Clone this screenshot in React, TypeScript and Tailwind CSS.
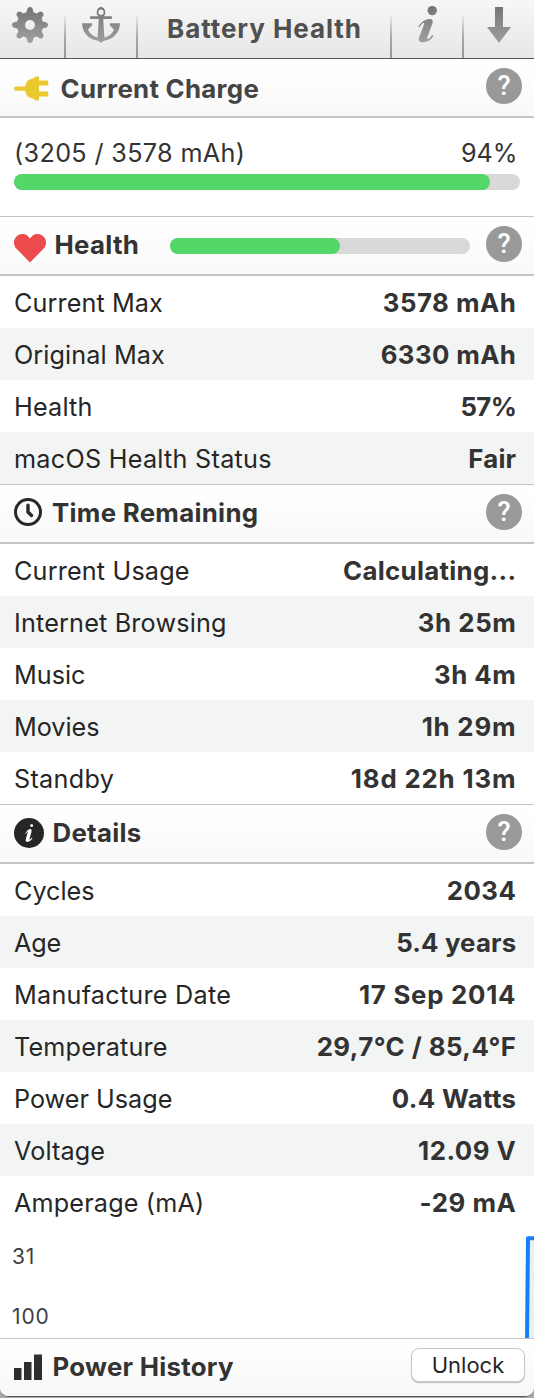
import type { ReactNode } from 'react';

type RowData = { label: string; value: string; labelTrack: string; valueTrack: string };

const healthRows: RowData[] = [
  { label: 'Current Max', value: '3578 mAh', labelTrack: 'tracking-[0.1px]', valueTrack: 'tracking-[0.5px]' },
  { label: 'Original Max', value: '6330 mAh', labelTrack: 'tracking-[0.1px]', valueTrack: 'tracking-[0.4px]' },
  { label: 'Health', value: '57%', labelTrack: 'tracking-[0.2px]', valueTrack: 'tracking-[-0.6px]' },
  { label: 'macOS Health Status', value: 'Fair', labelTrack: 'tracking-[0.27px]', valueTrack: 'tracking-[0.2px]' },
];

const timeRows: RowData[] = [
  { label: 'Current Usage', value: 'Calculating...', labelTrack: 'tracking-[0.17px]', valueTrack: 'tracking-[0.31px]' },
  { label: 'Internet Browsing', value: '3h 25m', labelTrack: 'tracking-[0.18px]', valueTrack: 'tracking-[0.57px]' },
  { label: 'Music', value: '3h 4m', labelTrack: 'tracking-normal', valueTrack: 'tracking-[0.5px]' },
  { label: 'Movies', value: '1h 29m', labelTrack: 'tracking-normal', valueTrack: 'tracking-[0.8px]' },
  { label: 'Standby', value: '18d 22h 13m', labelTrack: 'tracking-[0.3px]', valueTrack: 'tracking-[0.84px]' },
];

const detailRows: RowData[] = [
  { label: 'Cycles', value: '2034', labelTrack: 'tracking-normal', valueTrack: 'tracking-[0.45px]' },
  { label: 'Age', value: '5.4 years', labelTrack: 'tracking-[-0.2px]', valueTrack: 'tracking-[0.16px]' },
  { label: 'Manufacture Date', value: '17 Sep 2014', labelTrack: 'tracking-[0.25px]', valueTrack: 'tracking-[0.76px]' },
  { label: 'Temperature', value: '29,7°C / 85,4°F', labelTrack: 'tracking-[0.18px]', valueTrack: 'tracking-[0.46px]' },
  { label: 'Power Usage', value: '0.4 Watts', labelTrack: 'tracking-normal', valueTrack: 'tracking-[0.36px]' },
  { label: 'Voltage', value: '12.09 V', labelTrack: 'tracking-[0.1px]', valueTrack: 'tracking-[0.5px]' },
  { label: 'Amperage (mA)', value: '-29 mA', labelTrack: 'tracking-[0.16px]', valueTrack: 'tracking-[0.55px]' },
];

function Rows({ rows }: { rows: RowData[] }) {
  return (
    <div>
      {rows.map((row) => (
        <div
          key={row.label}
          className="flex h-[52px] items-center justify-between bg-white pl-[14px] pr-[17.7px] pt-[3px] text-[25.2px] even:bg-[#f3f5f4]"
        >
          <span className={`text-[#262626] ${row.labelTrack}`}>{row.label}</span>
          <span className={`pb-[2px] text-[25.8px] font-bold text-[#333] ${row.valueTrack}`}>{row.value}</span>
        </div>
      ))}
    </div>
  );
}

function Help() {
  return (
    <button className="mb-[3px] flex size-9 shrink-0 items-center justify-center rounded-full bg-[#999] font-['Roboto','Inter',sans-serif] text-[27px] font-medium leading-none text-white">
      ?
    </button>
  );
}

function SectionHeader({
  icon,
  title,
  gap,
  first = false,
  children,
}: {
  icon: ReactNode;
  title: string;
  gap: string;
  first?: boolean;
  children?: ReactNode;
}) {
  return (
    <div
      className={`flex items-center border-b-2 border-[#c4c4c4] bg-linear-to-b from-white to-[#f9f9f9] pl-[14px] pr-3 ${
        first ? 'h-[59px]' : 'h-[60px] border-t border-t-[#c4c4c4]'
      }`}
    >
      {icon}
      <h2 className={`${gap} text-[25.8px] font-bold tracking-[0.3px]`}>{title}</h2>
      <div className="flex flex-1 justify-end">{children}</div>
      <Help />
    </div>
  );
}

function ToolDivider() {
  return <div className="h-[42px] w-[2px] self-end bg-linear-to-b from-[#e8e8e8] via-[#aaa] to-[#969696]" />;
}

function ToolGradient({ id }: { id: string }) {
  return (
    <defs>
      <linearGradient id={id} x1="0" y1="6" x2="0" y2="43" gradientUnits="userSpaceOnUse">
        <stop offset="0" stopColor="#747474" />
        <stop offset="1" stopColor="#a0a0a0" />
      </linearGradient>
    </defs>
  );
}

function Gear() {
  return (
    <svg width="64" height="58" viewBox="0 0 64 58">
      <ToolGradient id="gear" />
      <path
        fill="url(#gear)"
        fillRule="evenodd"
        d="M27.6 8.3Q30 5.6 32.4 8.3L33.6 12.2L36.6 13.4L40 11.4Q43.6 11.3 43.6 15L41.6 18.4L42.8 21.4L46.7 22.6Q49.4 25 46.7 27.4L42.8 28.6L41.6 31.6L43.6 35Q43.6 38.7 40 38.6L36.6 36.6L33.6 37.8L32.4 41.7Q30 44.4 27.6 41.7L26.4 37.8L23.4 36.6L20 38.6Q16.4 38.7 16.4 35L18.4 31.6L17.2 28.6L13.3 27.4Q10.6 25 13.3 22.6L17.2 21.4L18.4 18.4L16.4 15Q16.4 11.3 20 11.4L23.4 13.4L26.4 12.2ZM30 20A5 5 0 1 0 30 30A5 5 0 1 0 30 20Z"
      />
    </svg>
  );
}

function Anchor() {
  return (
    <svg width="70" height="58" viewBox="66 0 70 58">
      <ToolGradient id="anchor" />
      <path
        fill="url(#anchor)"
        fillRule="evenodd"
        d="M101 6.8A5.6 5.6 0 0 1 103.8 16.2H111Q112.2 16.2 112.2 17.5Q112.2 18.9 111 18.9H103.2L104.4 37.6C109 36.6 112.5 33.4 113.9 29.6L109.8 25.3V23.2H120C119.8 32 113.7 39 106 40.2C103.6 40.7 102.2 41.6 101 43C99.8 41.6 98.4 40.7 96 40.2C88.3 39 82.2 32 82 23.2H92.2V25.3L88.1 29.6C89.5 33.4 93 36.6 97.6 37.6L98.8 18.9H91Q89.8 18.9 89.8 17.5Q89.8 16.2 91 16.2H98.2A5.6 5.6 0 0 1 101 6.8ZM101 9.6A2.6 2.6 0 1 0 101 14.8A2.6 2.6 0 1 0 101 9.6Z"
      />
    </svg>
  );
}

function ItalicInfo() {
  return (
    <svg width="70" height="58" viewBox="392 0 70 58">
      <ToolGradient id="info" />
      <g fill="url(#info)">
        <circle cx="432.2" cy="10.6" r="4.7" />
        <path d="M418.4 26.5C421.5 21.3 426.3 19 430 19C432.5 19 433.4 21 432.4 23.6L427.5 36.7C426.7 39 427.4 39.4 428.5 38.8C430 38 431.2 36.5 432.2 35L433.6 36C430.9 40.2 427 42.2 422.8 42.2C419.4 42.2 418 40.3 419.2 37.2L424 24.6C424.7 22.8 423.8 22.6 422.7 23.3C421.6 24 420.8 25.2 419.8 27.2Z" />
      </g>
    </svg>
  );
}

function DownArrow() {
  return (
    <svg width="70" height="58" viewBox="464 0 70 58">
      <ToolGradient id="arrow" />
      <path fill="url(#arrow)" d="M495 7H503V27H511L499 43L487 27H495Z" />
    </svg>
  );
}

const plug = (
  <svg className="mt-[2px] shrink-0" width="35" height="26" viewBox="0 0 35 26" fill="#eac82f">
    <path d="M2 10.4H11.2C11.8 5.5 15 2.5 20.5 2.2V1.5Q20.5 0.5 21.5 0.5H24Q25 0.5 25 1.5V4.4H33Q34.3 4.4 34.3 5.7V8.2Q34.3 9.5 33 9.5H25V15.5H33Q34.3 15.5 34.3 16.8V19.2Q34.3 20.5 33 20.5H25V23.5Q25 24.5 24 24.5H21.5Q20.5 24.5 20.5 23.5V22.8C15 22.5 11.8 19.5 11.2 14.8H2Q0 14.8 0 12.6Q0 10.4 2 10.4Z" />
  </svg>
);

const heart = (
  <svg className="mt-[5px] shrink-0" width="32" height="29" viewBox="0 0 32 29" fill="#ec4b4e">
    <path d="M16 28.5L2.3 14.5C-0.7 11.3-0.7 6.4 1.8 3.3C5-0.6 10.5-0.9 13.7 2Q15 3.1 16 4.4Q17 3.1 18.3 2C21.5-0.9 27-0.6 30.2 3.3C32.7 6.4 32.7 11.3 29.7 14.5Z" />
  </svg>
);

const clock = (
  <svg className="mb-[3px] shrink-0" width="28" height="28" viewBox="0 0 28 28" fill="none" stroke="#282828">
    <circle cx="14" cy="14" r="12.5" strokeWidth="3" />
    <path d="M14 7.2V14L17.5 17.5" strokeWidth="3.4" strokeLinecap="round" strokeLinejoin="round" />
  </svg>
);

const infoDisc = (
  <svg className="mb-[1px] shrink-0" width="30" height="30" viewBox="0 0 30 30">
    <circle cx="15" cy="15" r="15" fill="#262626" />
    <g fill="white" transform="translate(11.3 6.2) scale(.5 .74)">
      <ellipse cx="12.7" cy="1.7" rx="2.8" ry="2.1" />
      <path d="M0 12.5C3.1 8.5 6.9 6.6 10.3 6.6C12.5 6.6 13.2 8.2 12.3 10.5L8.8 19C8.2 20.7 9 21 10.1 20.4L13.3 17.9L14.4 18.8C11.8 22.2 8.2 24 4.2 24C1 24 0 22.2 1.1 19.6L4.9 11C5.5 9.6 4.7 9.6 3.8 10.2L1.1 13.3Z" />
    </g>
  </svg>
);

const bars = (
  <svg className="mb-[1px] shrink-0" width="28" height="26" viewBox="0 0 28 26" fill="#2e2e2e">
    <path d="M0 14H7.5V26H0ZM10 8H17.5V26H10ZM20 0.5H28V26H20Z" />
  </svg>
);

export default function App() {
  return (
    <main className="flex h-[1398px] w-[534px] flex-col overflow-hidden bg-[#a6a6a6] font-['Inter','Noto_Sans',sans-serif] leading-none whitespace-nowrap">
      <div className="flex h-[1397px] flex-col overflow-hidden rounded-b-[9px] border-b border-[#555] bg-white">
        <header className="flex h-[59px] shrink-0 items-center border-b border-[#555] bg-linear-to-b from-[#f7f7f7] to-[#e7e7e7]">
          <Gear />
          <ToolDivider />
          <Anchor />
          <ToolDivider />
          <h1 className="w-[252px] pb-[1px] pl-[1px] text-center text-[26px] font-bold tracking-[0.92px] text-[#505050]">
            Battery Health
          </h1>
          <ToolDivider />
          <ItalicInfo />
          <ToolDivider />
          <DownArrow />
        </header>

        <SectionHeader first icon={plug} title="Current Charge" gap="ml-[11.5px] pt-[2px] text-[#444]" />
        <div className="h-[98px] shrink-0 pt-[23px]">
          <div className="flex h-[26px] items-center justify-between pl-[14px] pr-[16.5px] text-[25.2px] text-[#333]">
            <span className="tracking-[0.34px]">(3205 / 3578 mAh)</span>
            <span>94%</span>
          </div>
          <div className="ml-[14px] mt-[7px] h-4 w-[506px] rounded-full bg-[#d9d9d9]">
            <div className="h-4 w-[476px] rounded-full bg-[#53d769]" />
          </div>
        </div>

        <SectionHeader icon={heart} title="Health" gap="ml-[8.5px] pb-[2px] text-[#333]">
          <div className="mr-4 h-4 w-[300px] rounded-full bg-[#d9d9d9]">
            <div className="h-4 w-[170px] rounded-full bg-[#53d769]" />
          </div>
        </SectionHeader>
        <Rows rows={healthRows} />

        <SectionHeader icon={clock} title="Time Remaining" gap="ml-[10px] pb-[2px] text-[#333]" />
        <Rows rows={timeRows} />

        <SectionHeader icon={infoDisc} title="Details" gap="ml-[8.5px] pb-[2px] text-[#333]" />
        <Rows rows={detailRows} />

        <div className="flex h-[110px] shrink-0 justify-between">
          <div className="flex flex-col gap-[40px] pl-3 pt-[19px] text-[21px] leading-5 tracking-[0.9px] text-[#3f3f3f]">
            <span>31</span>
            <span>100</span>
          </div>
          <svg width="10" height="110" viewBox="0 0 10 110">
            <path d="M3 112L4 10.2H12V112Z" fill="#e5effd" stroke="#157efb" strokeWidth="4" strokeLinejoin="round" />
          </svg>
        </div>

        <footer className="flex h-[58px] shrink-0 items-center border-t border-[#c4c4c4] bg-linear-to-b from-white to-[#f7f7f7] pl-[14px] pr-[9px]">
          {bars}
          <h2 className="ml-[10.5px] flex-1 pb-[2px] text-[25.8px] font-bold tracking-[0.28px] text-[#333]">Power History</h2>
          <button className="mb-[5px] h-[34px] w-[114px] rounded-[8px] border border-[#c9c9c9] bg-white text-[22px] text-[#262626] shadow-[0_1px_1px_#bbb]">
            Unlock
          </button>
        </footer>
      </div>
    </main>
  );
}
